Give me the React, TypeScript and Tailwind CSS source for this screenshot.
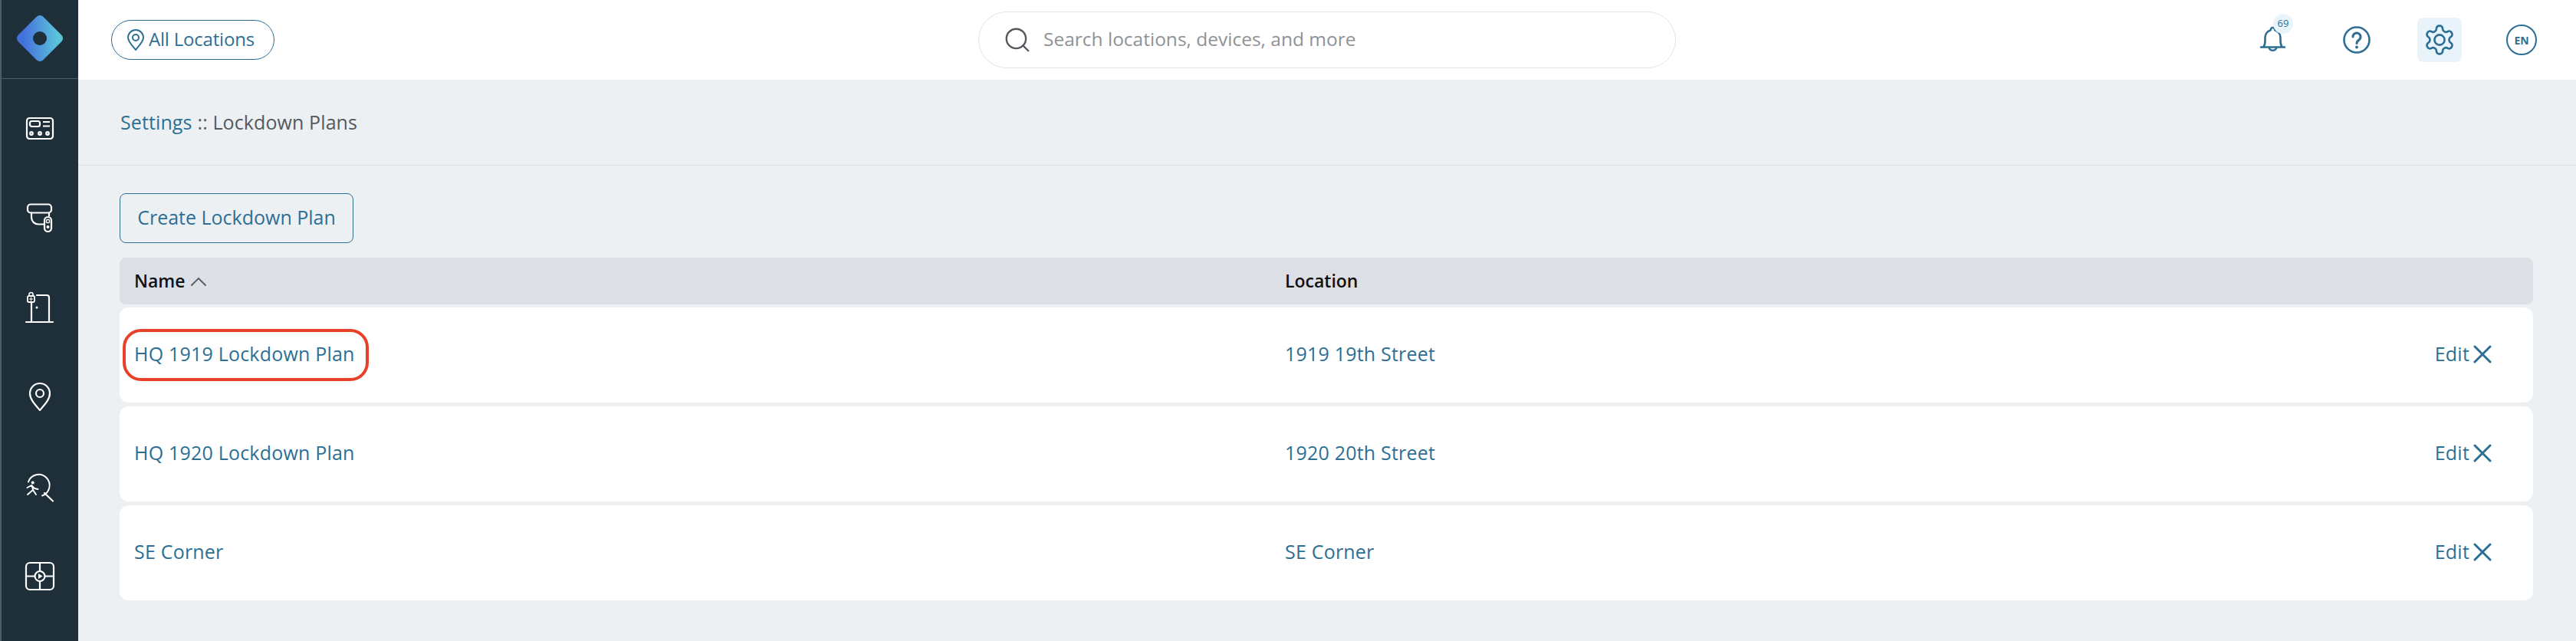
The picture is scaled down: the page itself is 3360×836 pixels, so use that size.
import { Search } from 'lucide-react'

const plans = [
  { name: 'HQ 1919 Lockdown Plan', location: '1919 19th Street', marked: true },
  { name: 'HQ 1920 Lockdown Plan', location: '1920 20th Street', marked: false },
  { name: 'SE Corner', location: 'SE Corner', marked: false },
]

function Logo() {
  return (
    <svg width="72" height="72" viewBox="0 0 72 72">
      <defs>
        <linearGradient id="logo" x1="0.85" y1="0.15" x2="0.2" y2="0.85">
          <stop offset="0" stopColor="#5cc3d9" />
          <stop offset="1" stopColor="#4371dc" />
        </linearGradient>
      </defs>
      <rect x="13" y="13" width="46" height="46" rx="6" fill="url(#logo)" transform="rotate(45 36 36)" />
      <circle cx="36" cy="36" r="9" fill="#1e2f3a" />
    </svg>
  )
}

function PanelIcon() {
  return (
    <svg width="40" height="40" viewBox="0 0 40 40" fill="none" stroke="#fff" strokeWidth="2.2">
      <rect x="3" y="6" width="34" height="27" rx="3.5" />
      <rect x="7" y="10" width="13" height="7" rx="2.5" />
      <path d="M24 11h9M24 16.5h9" />
      <circle cx="9" cy="26" r="1.8" />
      <circle cx="20" cy="26" r="1.8" />
      <circle cx="30" cy="26" r="1.8" />
    </svg>
  )
}

function CameraIcon() {
  return (
    <svg width="40" height="40" viewBox="0 0 40 40" fill="none" stroke="#fff" strokeWidth="2.2" strokeLinecap="round">
      <rect x="4" y="1.500" width="31" height="11" rx="4" />
      <path d="M9 12.500v6a9 9 0 0 0 9 9h8" />
      <path d="M32 12.500v4" />
      <rect x="26" y="18" width="9" height="19" rx="4.500" />
      <rect x="28.500" y="21.500" width="4" height="4" rx="1" strokeWidth="1.300" />
      <circle cx="30.500" cy="31" r="2" fill="#fff" stroke="none" />
    </svg>
  )
}

function DoorIcon() {
  return (
    <svg width="40" height="42" viewBox="0 0 40 42" fill="none" stroke="#fff" strokeWidth="2.2" strokeLinecap="round">
      <path d="M2 40h35" />
      <path d="M9 40V14" />
      <path d="M16 5h13a3 3 0 0 1 3 3v32" />
      <rect x="4" y="6" width="9" height="8" rx="1.500" strokeWidth="1.800" />
      <path d="M6 6V4a2.500 2.500 0 0 1 5 0v2" strokeWidth="1.600" />
      <path d="M6.500 10h4M8.500 8v4" strokeWidth="1.200" />
      <circle cx="16" cy="21" r="1.500" fill="#fff" stroke="none" />
    </svg>
  )
}

function PinIcon() {
  return (
    <svg width="40" height="40" viewBox="0 0 40 40" fill="none" stroke="#fff" strokeWidth="2.2" strokeLinejoin="round">
      <path d="M20 37C14 30 7 23 7 15a13 13 0 0 1 26 0c0 8-7 15-13 22z" />
      <circle cx="20" cy="15" r="5" />
    </svg>
  )
}

function PersonSearchIcon() {
  return (
    <svg width="40" height="40" viewBox="0 0 40 40" fill="none" stroke="#fff" strokeWidth="1.900" strokeLinecap="round" strokeLinejoin="round">
      <path d="M5 12.500A14.200 14.200 0 1 1 23 30.500" />
      <path d="M26 27l11 10.500" strokeWidth="2.200" />
      <circle cx="10.700" cy="13.500" r="2" fill="#fff" stroke="none" />
      <path d="M3.500 20l5.500-3 4 4 4.500 1" />
      <path d="M10 18l1 5-7 6M11 23l4 6" />
    </svg>
  )
}

function VideoGridIcon() {
  return (
    <svg width="40" height="40" viewBox="0 0 40 40" fill="none" stroke="#fff" strokeWidth="2.2">
      <rect x="2" y="2" width="36" height="35" rx="5" />
      <circle cx="20" cy="19.500" r="6.500" />
      <path d="M20 2v11M20 26v11M2 19.500h11.500M26.500 19.500H38" />
      <path d="M18 16l5.500 3.500-5.500 3.500z" fill="#fff" stroke="none" />
    </svg>
  )
}

function LocationPin() {
  return (
    <svg width="24" height="28" viewBox="0 0 24 28" fill="none" stroke="#2d6f94" strokeWidth="2" strokeLinejoin="round">
      <path d="M12 27C7 21 2 16 2 11a10 10 0 0 1 20 0c0 5-5 10-10 16z" />
      <circle cx="12" cy="11" r="4" />
    </svg>
  )
}

function BellIcon() {
  return (
    <svg width="36" height="40" viewBox="0 0 36 40" fill="none" stroke="#2d6f94" strokeWidth="2.600" strokeLinecap="round" strokeLinejoin="round">
      <path d="M2 29.500h31M5.500 29c1.500-2 2-4 2-8v-4a10 10 0 0 1 7-9.500C15 5 16 4 17.500 4S20 5 20.500 7.500a10 10 0 0 1 7 9.500v4c0 4 .5 6 2 8" />
      <path d="M12.500 30a5.200 5.200 0 0 0 10 0" />
    </svg>
  )
}

function HelpIcon() {
  return (
    <svg width="38" height="38" viewBox="0 0 38 38" fill="none" stroke="#2d6f94" strokeWidth="2.600" strokeLinecap="round">
      <circle cx="19" cy="19" r="16.500" />
      <path d="M14 15a5 5 0 1 1 8 4c-2 1.500-3 2.500-3 4.500" strokeWidth="3" />
      <circle cx="19" cy="28.500" r="1.900" fill="#2d6f94" stroke="none" />
    </svg>
  )
}

function GearIcon() {
  return (
    <svg width="44" height="44" viewBox="0 0 24 24" fill="none" stroke="#2d6f94" strokeWidth="1.450" strokeLinecap="round" strokeLinejoin="round">
      <path d="M12.220 2h-.44a2 2 0 0 0-2 2v.18a2 2 0 0 1-1 1.730l-.43.250a2 2 0 0 1-2 0l-.15-.080a2 2 0 0 0-2.730.730l-.22.380a2 2 0 0 0 .730 2.730l.15.100a2 2 0 0 1 1 1.720v.510a2 2 0 0 1-1 1.740l-.15.090a2 2 0 0 0-.730 2.730l.22.380a2 2 0 0 0 2.730.730l.15-.080a2 2 0 0 1 2 0l.43.250a2 2 0 0 1 1 1.730V20a2 2 0 0 0 2 2h.44a2 2 0 0 0 2-2v-.18a2 2 0 0 1 1-1.730l.43-.250a2 2 0 0 1 2 0l.15.080a2 2 0 0 0 2.730-.730l.22-.390a2 2 0 0 0-.730-2.730l-.15-.080a2 2 0 0 1-1-1.740v-.500a2 2 0 0 1 1-1.740l.15-.090a2 2 0 0 0 .730-2.730l-.22-.380a2 2 0 0 0-2.730-.730l-.15.080a2 2 0 0 1-2 0l-.43-.250a2 2 0 0 1-1-1.730V4a2 2 0 0 0-2-2z" />
      <circle cx="12" cy="12" r="3.600" />
    </svg>
  )
}

function CloseIcon() {
  return (
    <svg width="24" height="24" viewBox="0 0 24 24" fill="none" stroke="#2d6f94" strokeWidth="3" strokeLinecap="round">
      <path d="M2 2l20 20M22 2L2 22" />
    </svg>
  )
}

function SortArrow() {
  return (
    <svg width="20" height="12" viewBox="0 0 20 12" fill="none" stroke="#55595e" strokeWidth="1.800" strokeLinecap="round">
      <path d="M1 11l9-9 9 9" />
    </svg>
  )
}

export default function App() {
  return (
    <div className="flex h-[836px] w-[3360px] overflow-hidden bg-[#edf0f3] font-['Open_Sans',sans-serif] text-[25px] text-[#2d6f94]">
      {/* Sidebar */}
      <aside className="flex h-full w-[102px] shrink-0 flex-col border-l-2 border-[#4a5c68] bg-[#1e2f3a]">
        <div className="flex h-[103px] shrink-0 items-center justify-center border-b border-[#4a5c68] pb-[3px]">
          <Logo />
        </div>
        <nav className="flex flex-col pt-[6px]">
          <div className="flex h-[117px] items-center justify-center"><PanelIcon /></div>
          <div className="flex h-[117px] items-center justify-center"><CameraIcon /></div>
          <div className="flex h-[116px] items-center justify-center"><DoorIcon /></div>
          <div className="flex h-[117px] items-center justify-center"><PinIcon /></div>
          <div className="flex h-[119px] items-center justify-center"><PersonSearchIcon /></div>
          <div className="flex h-[113px] items-center justify-center"><VideoGridIcon /></div>
        </nav>
      </aside>

      <div className="flex min-w-0 flex-1 flex-col">
        {/* Top bar */}
        <header className="grid h-[104px] shrink-0 grid-cols-[1fr_910px_1fr] items-center bg-white">
          <div className="pl-[43px]">
            <div className="flex h-[52px] w-[213px] items-center gap-[5px] rounded-full border border-[#2d6f94] pl-[19px]">
              <LocationPin />
              <span className="pb-[2px] text-[24px] tracking-[-0.2px]">All Locations</span>
            </div>
          </div>
          <div className="flex h-[74px] items-center gap-[15px] rounded-full border border-[#e2e4e9] pl-[31px]">
            <Search size={38} strokeWidth={1.500} className="text-[#55595e]" />
            <span className="pb-[2px] text-[24.5px] text-[#8e9296]">Search locations, devices, and more</span>
          </div>
          <div className="flex items-center justify-end">
            <div className="relative flex w-[58px] justify-center">
              <BellIcon />
              <span className="absolute left-[29px] top-[-14px] flex h-[26px] w-[26px] items-center justify-center rounded-full bg-[#e8f4fa] text-[13px]">69</span>
            </div>
            <div className="ml-[51px] flex w-[58px] justify-center"><HelpIcon /></div>
            <div className="ml-[50px] flex h-[58px] w-[58px] items-center justify-center rounded-[8px] bg-[#e8f4fa]"><GearIcon /></div>
            <div className="ml-[58px] mr-[51px] flex h-[40px] w-[40px] items-center justify-center rounded-full border-2 border-[#2d6f94] text-[14px] font-bold">EN</div>
          </div>
        </header>

        {/* Breadcrumb */}
        <div className="flex h-[112px] shrink-0 items-center border-b border-[#dcdfe4] pl-[55px] tracking-[0.1px]">
          <span>Settings</span>
          <span className="ml-[7px] text-[#55595e]">:: Lockdown Plans</span>
        </div>

        {/* Content */}
        <main className="flex flex-col pl-[54px] pr-[56px] pt-[36px]">
          <button className="h-[65px] w-[305px] rounded-[8px] border border-[#2d6f94] pb-[2px] text-center">Create Lockdown Plan</button>

          <div className="mt-[19px] grid h-[61px] grid-cols-[1501px_1fr] items-center rounded-[8px] bg-[#dcdfe6] pl-[19px] text-[23px] font-semibold text-[#111]">
            <div className="flex items-center gap-[7px]">
              Name
              <SortArrow />
            </div>
            <div>Location</div>
          </div>

          <div className="mt-[4px] flex flex-col gap-[5px]">
            {plans.map((plan) => (
              <div key={plan.name} className="grid h-[124px] grid-cols-[1501px_1fr_auto] items-center rounded-[12px] bg-white pb-[3px] pl-[19px] pr-[54px] tracking-[0.2px]">
                <div className="relative">
                  <span>{plan.name}</span>
                  {plan.marked && (
                    <span className="absolute left-[-15px] top-[-14px] h-[68px] w-[321px] rounded-[24px] border-[4px] border-[#e8412a]" />
                  )}
                </div>
                <div>{plan.location}</div>
                <div className="flex items-center gap-[5px]">
                  Edit
                  <CloseIcon />
                </div>
              </div>
            ))}
          </div>
        </main>
      </div>
    </div>
  )
}
